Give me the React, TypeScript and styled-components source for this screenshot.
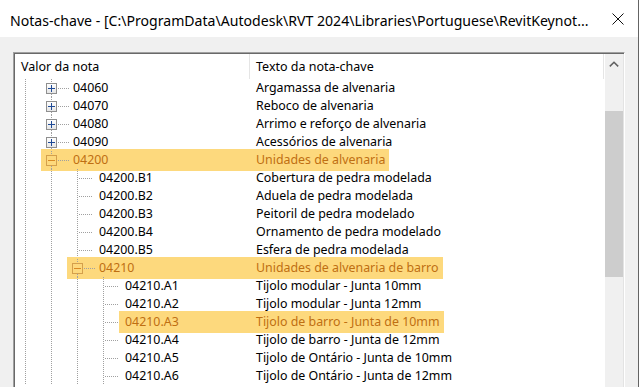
import styled, { createGlobalStyle, css } from "styled-components";

type Kind = "plus" | "minus" | "leaf";
type Item = { level: number; code: string; desc: string; kind: Kind; active?: boolean };

const items: Item[] = [
	{ level: 1, code: "04060", desc: "Argamassa de alvenaria", kind: "plus" },
	{ level: 1, code: "04070", desc: "Reboco de alvenaria", kind: "plus" },
	{ level: 1, code: "04080", desc: "Arrimo e reforço de alvenaria", kind: "plus" },
	{ level: 1, code: "04090", desc: "Acessórios de alvenaria", kind: "plus" },
	{ level: 1, code: "04200", desc: "Unidades de alvenaria", kind: "minus", active: true },
	{ level: 2, code: "04200.B1", desc: "Cobertura de pedra modelada", kind: "leaf" },
	{ level: 2, code: "04200.B2", desc: "Aduela de pedra modelada", kind: "leaf" },
	{ level: 2, code: "04200.B3", desc: "Peitoril de pedra modelado", kind: "leaf" },
	{ level: 2, code: "04200.B4", desc: "Ornamento de pedra modelado", kind: "leaf" },
	{ level: 2, code: "04200.B5", desc: "Esfera de pedra modelada", kind: "leaf" },
	{ level: 2, code: "04210", desc: "Unidades de alvenaria de barro", kind: "minus", active: true },
	{ level: 3, code: "04210.A1", desc: "Tijolo modular - Junta 10mm", kind: "leaf" },
	{ level: 3, code: "04210.A2", desc: "Tijolo modular - Junta 12mm", kind: "leaf" },
	{ level: 3, code: "04210.A3", desc: "Tijolo de barro - Junta de 10mm", kind: "leaf", active: true },
	{ level: 3, code: "04210.A4", desc: "Tijolo de barro - Junta de 12mm", kind: "leaf" },
	{ level: 3, code: "04210.A5", desc: "Tijolo de Ontário - Junta de 10mm", kind: "leaf" },
	{ level: 3, code: "04210.A6", desc: "Tijolo de Ontário - Junta de 12mm", kind: "leaf" },
];

const DOT = "#a0a0a0";
const HL = "#fdd97d";
const HL_TEXT = "#bf6f12";
const vDots = `repeating-linear-gradient(to bottom, ${DOT} 0 1px, transparent 1px 2px)`;
const hDots = `repeating-linear-gradient(to right, ${DOT} 0 1px, transparent 1px 2px)`;

const Expander = ({ open, active }: { open: boolean; active?: boolean }) => (
	<svg width="32" height="22" viewBox="0 0 32 22" style={{ flex: "none" }}>
		<g stroke={DOT} strokeDasharray="1 1" fill="none">
			<path d="M10.5 2V6" />
			<path d="M10.5 17V20" />
			<path d="M17 11.5H28" />
		</g>
		<defs>
			<linearGradient id="boxfill" x1="0" y1="0" x2="0" y2="1">
				<stop offset="0" stopColor="#ffffff" />
				<stop offset="1" stopColor="#e4e4e4" />
			</linearGradient>
		</defs>
		<rect
			x="5.5"
			y="6.5"
			width="10"
			height="10"
			fill={active ? "none" : "url(#boxfill)"}
			stroke={active ? "#d4a04c" : "#8f8f8f"}
		/>
		<path d="M7 11.5H14" stroke={active ? "#d98a24" : "#1f4a96"} />
		{!open && <path d="M10.5 8V15" stroke="#1f4a96" />}
	</svg>
);

const Row = ({ item }: { item: Item }) => {
	const guides = Array.from({ length: item.level });
	return (
		<RowWrap>
			<CodeCol>
				{guides.map((_, i) => (
					<Guide key={i} />
				))}
				{item.kind === "leaf" && <Leaf />}
				<Node active={item.active} leaf={item.kind === "leaf"}>
					{item.kind !== "leaf" && <Expander open={item.kind === "minus"} active={item.active} />}
					{item.code}
				</Node>
			</CodeCol>
			<Desc active={item.active}>{item.desc}</Desc>
		</RowWrap>
	);
};

export default function App() {
	return (
		<>
			<GlobalStyle />
			<Window>
				<TitleBar>
					<Title>Notas-chave - [C:\ProgramData\Autodesk\RVT 2024\Libraries\Portuguese\RevitKeynot...</Title>
					<Close>
						<svg width="12" height="12" viewBox="0 0 12 12">
							<path d="M0.5 0.5L11.5 11.5M11.5 0.5L0.5 11.5" stroke="#111" strokeWidth="1" />
						</svg>
					</Close>
				</TitleBar>
				<Body>
					<TreeBox>
						<List>
							<Header>
								<HeadCell width={235}>Valor da nota</HeadCell>
								<HeadCell width={354}>Texto da nota-chave</HeadCell>
							</Header>
							{items.map((it) => (
								<Row key={it.code} item={it} />
							))}
						</List>
						<Scrollbar>
							<ArrowBtn>
								<svg width="10" height="6" viewBox="0 0 10 6">
									<path d="M0.8 5.4L5 1.2L9.2 5.4" stroke="#606060" strokeWidth="1.5" fill="none" />
								</svg>
							</ArrowBtn>
							<Track />
							<Thumb />
						</Scrollbar>
					</TreeBox>
				</Body>
			</Window>
		</>
	);
}

const GlobalStyle = createGlobalStyle`
	html, body {
		margin: 0;
		padding: 0;
		background: #f0f0f0;
	}
	body {
		font-family: "Noto Sans", "Open Sans", sans-serif;
		color: #000;
	}
`;

const Window = styled.div`
	width: 639px;
	height: 387px;
	box-sizing: border-box;
	border-right: 1px solid #646464;
	display: flex;
	flex-direction: column;
	overflow: hidden;
	background: #f0f0f0;
`;

const TitleBar = styled.div`
	height: 37px;
	flex: none;
	background: #fff;
	display: flex;
	align-items: center;
	padding: 3px 0 0 10px;
	box-sizing: border-box;
`;

const Title = styled.div`
	font-size: 14.1px;
	white-space: nowrap;
	flex: 1;
	min-width: 0;
	color: #000;
`;

const Close = styled.div`
	width: 40px;
	flex: none;
	display: flex;
	align-items: center;
	justify-content: center;
	margin-top: -3px;
`;

const Body = styled.div`
	flex: 1;
	padding: 15px 13px 0 13px;
	display: flex;
	min-height: 0;
`;

const TreeBox = styled.div`
	flex: 1;
	display: flex;
	background: #fff;
	border-top: 1px solid #a0a0a0;
	border-left: 1px solid #a0a0a0;
	border-right: 1px solid #fff;
	box-shadow: inset 1px 1px 0 #696969, inset -1px 0 0 #e3e3e3;
	padding: 1px 1px 0 1px;
	height: 400px;
`;

const List = styled.div`
	flex: 1;
	overflow: hidden;
	font-size: 12.4px;
`;

const Header = styled.div`
	display: flex;
	height: 25px;
	font-size: 12.5px;
`;

const HeadCell = styled.div<{ width: number }>`
	width: ${(p) => p.width}px;
	box-sizing: border-box;
	padding-left: 6px;
	display: flex;
	align-items: center;
	border-right: 1px solid #e5e5e5;
	white-space: nowrap;
`;

const RowWrap = styled.div`
	display: flex;
	height: 18px;
	line-height: 18px;
	white-space: nowrap;
`;

const CodeCol = styled.div`
	display: flex;
	width: 241px;
	flex: none;
`;

const Guide = styled.div`
	width: 26px;
	flex: none;
	background: ${vDots} 10px 0 / 1px 100% no-repeat;
`;

const Leaf = styled.div`
	width: 26px;
	flex: none;
	background: ${vDots} 10px 0 / 1px 100% no-repeat, ${hDots} 12px 9px / 14px 1px no-repeat;
`;

const Node = styled.div<{ active?: boolean; leaf?: boolean }>`
	flex: 1;
	align-self: center;
	height: 22px;
	display: flex;
	align-items: center;
	padding-left: ${(p) => (p.leaf ? 6 : 0)}px;
	${(p) =>
		p.active &&
		css`
			background: ${HL};
			color: ${HL_TEXT};
		`}
`;

const Desc = styled.div<{ active?: boolean }>`
	align-self: center;
	height: 22px;
	display: flex;
	align-items: center;
	padding-right: 4px;
	${(p) =>
		p.active &&
		css`
			background: ${HL};
			color: ${HL_TEXT};
		`}
`;

const Scrollbar = styled.div`
	width: 18px;
	flex: none;
	display: flex;
	flex-direction: column;
	background: #f0f0f0;
`;

const ArrowBtn = styled.div`
	height: 18px;
	display: flex;
	align-items: center;
	justify-content: center;
	padding-top: 2px;
	box-sizing: border-box;
`;

const Track = styled.div`
	height: 39px;
`;

const Thumb = styled.div`
	height: 166px;
	background: #cdcdcd;
`;
